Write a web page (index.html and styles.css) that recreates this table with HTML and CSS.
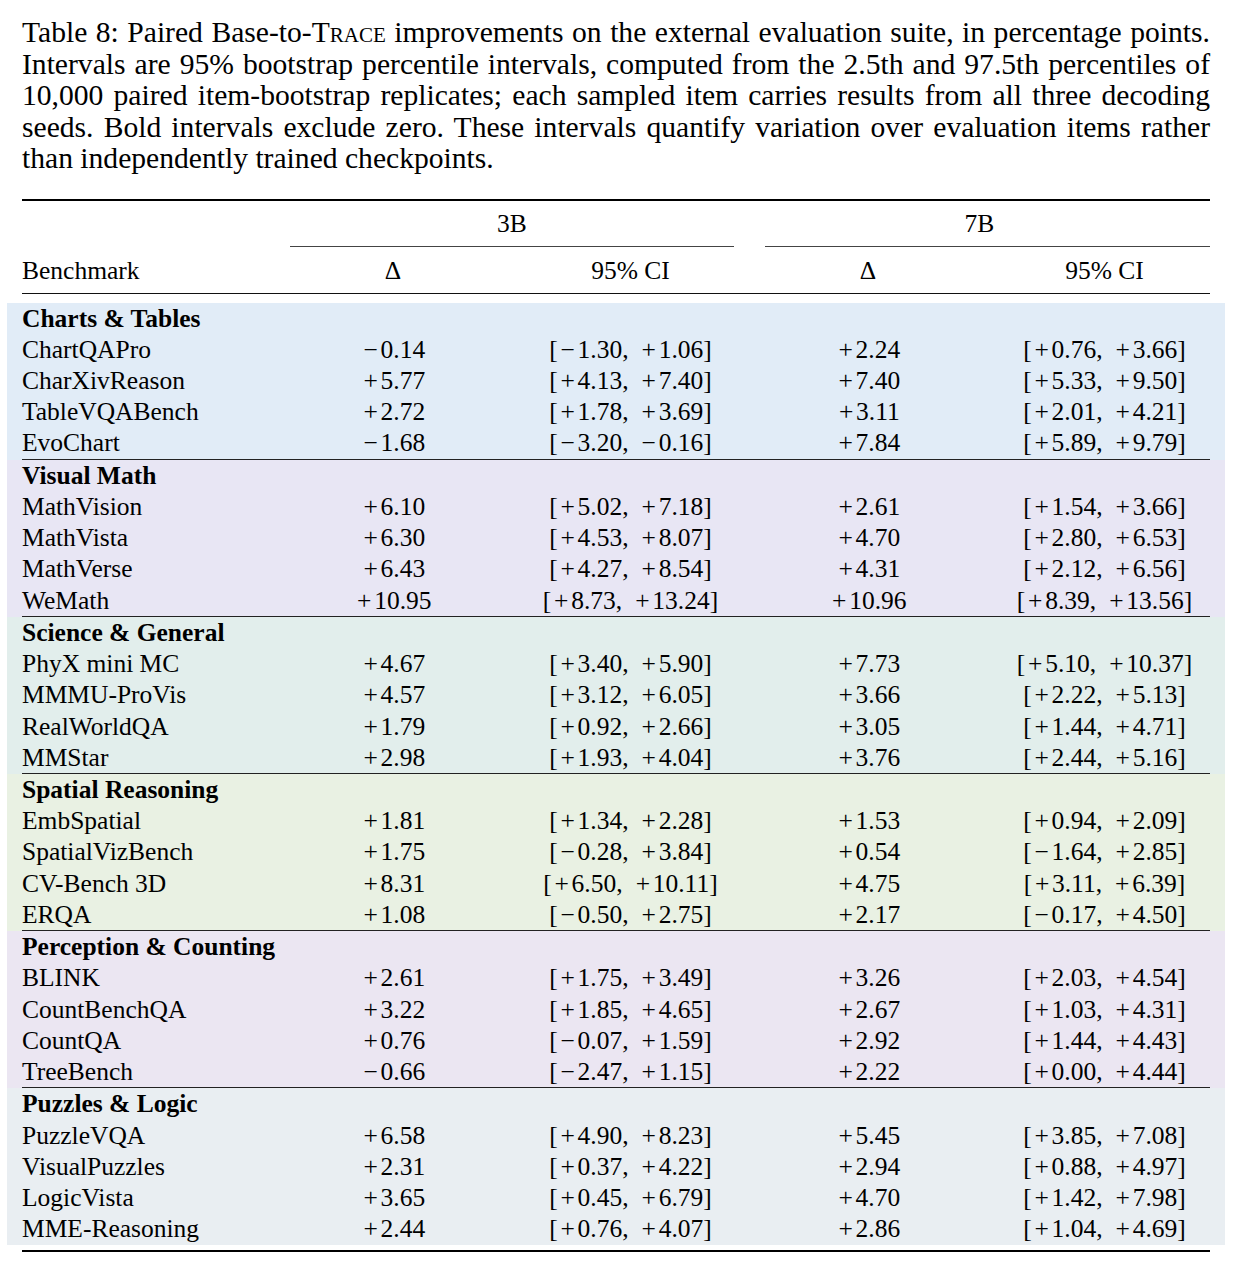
FILE: index.html
```html
<!DOCTYPE html>
<html lang="en">
<head>
<meta charset="utf-8">
<title>Table 8</title>
<link rel="stylesheet" href="styles.css">
</head>
<body>
<div class="page">
  <div class="caption">
    <span class="cl">Table 8: Paired Base-to-<span class="sc">Trace</span> improvements on the external evaluation suite, in percentage points.</span>
    <span class="cl">Intervals are 95% bootstrap percentile intervals, computed from the 2.5th and 97.5th percentiles of</span>
    <span class="cl">10,000 paired item-bootstrap replicates; each sampled item carries results from all three decoding</span>
    <span class="cl">seeds. Bold intervals exclude zero. These intervals quantify variation over evaluation items rather</span>
    <span class="cl last">than independently trained checkpoints.</span>
  </div>

  <div class="tbl">
    <div class="head">
      <div class="hrow">
        <div class="c1"></div>
        <div class="span3b">3B</div>
        <div class="span7b">7B</div>
      </div>
      <div class="row hrow2">
        <div class="c1">Benchmark</div>
        <div class="c2">Δ</div>
        <div class="c3">95% CI</div>
        <div class="c4">Δ</div>
        <div class="c5">95% CI</div>
      </div>
    </div>

    <div class="groups">
      <div class="group g1"><div class="inner sep">
        <div class="row"><div class="c1 gh">Charts &amp; Tables</div></div>
        <div class="row"><div class="c1">ChartQAPro</div><div class="c2"><i>−</i>0.14</div><div class="c3">[<i>−</i>1.30, <i>+</i>1.06]</div><div class="c4"><i>+</i>2.24</div><div class="c5">[<i>+</i>0.76, <i>+</i>3.66]</div></div>
        <div class="row"><div class="c1">CharXivReason</div><div class="c2"><i>+</i>5.77</div><div class="c3">[<i>+</i>4.13, <i>+</i>7.40]</div><div class="c4"><i>+</i>7.40</div><div class="c5">[<i>+</i>5.33, <i>+</i>9.50]</div></div>
        <div class="row"><div class="c1">TableVQABench</div><div class="c2"><i>+</i>2.72</div><div class="c3">[<i>+</i>1.78, <i>+</i>3.69]</div><div class="c4"><i>+</i>3.11</div><div class="c5">[<i>+</i>2.01, <i>+</i>4.21]</div></div>
        <div class="row"><div class="c1">EvoChart</div><div class="c2"><i>−</i>1.68</div><div class="c3">[<i>−</i>3.20, <i>−</i>0.16]</div><div class="c4"><i>+</i>7.84</div><div class="c5">[<i>+</i>5.89, <i>+</i>9.79]</div></div>
      </div></div>

      <div class="group g2"><div class="inner sep">
        <div class="row"><div class="c1 gh">Visual Math</div></div>
        <div class="row"><div class="c1">MathVision</div><div class="c2"><i>+</i>6.10</div><div class="c3">[<i>+</i>5.02, <i>+</i>7.18]</div><div class="c4"><i>+</i>2.61</div><div class="c5">[<i>+</i>1.54, <i>+</i>3.66]</div></div>
        <div class="row"><div class="c1">MathVista</div><div class="c2"><i>+</i>6.30</div><div class="c3">[<i>+</i>4.53, <i>+</i>8.07]</div><div class="c4"><i>+</i>4.70</div><div class="c5">[<i>+</i>2.80, <i>+</i>6.53]</div></div>
        <div class="row"><div class="c1">MathVerse</div><div class="c2"><i>+</i>6.43</div><div class="c3">[<i>+</i>4.27, <i>+</i>8.54]</div><div class="c4"><i>+</i>4.31</div><div class="c5">[<i>+</i>2.12, <i>+</i>6.56]</div></div>
        <div class="row"><div class="c1">WeMath</div><div class="c2"><i>+</i>10.95</div><div class="c3">[<i>+</i>8.73, <i>+</i>13.24]</div><div class="c4"><i>+</i>10.96</div><div class="c5">[<i>+</i>8.39, <i>+</i>13.56]</div></div>
      </div></div>

      <div class="group g3"><div class="inner sep">
        <div class="row"><div class="c1 gh">Science &amp; General</div></div>
        <div class="row"><div class="c1">PhyX mini MC</div><div class="c2"><i>+</i>4.67</div><div class="c3">[<i>+</i>3.40, <i>+</i>5.90]</div><div class="c4"><i>+</i>7.73</div><div class="c5">[<i>+</i>5.10, <i>+</i>10.37]</div></div>
        <div class="row"><div class="c1">MMMU-ProVis</div><div class="c2"><i>+</i>4.57</div><div class="c3">[<i>+</i>3.12, <i>+</i>6.05]</div><div class="c4"><i>+</i>3.66</div><div class="c5">[<i>+</i>2.22, <i>+</i>5.13]</div></div>
        <div class="row"><div class="c1">RealWorldQA</div><div class="c2"><i>+</i>1.79</div><div class="c3">[<i>+</i>0.92, <i>+</i>2.66]</div><div class="c4"><i>+</i>3.05</div><div class="c5">[<i>+</i>1.44, <i>+</i>4.71]</div></div>
        <div class="row"><div class="c1">MMStar</div><div class="c2"><i>+</i>2.98</div><div class="c3">[<i>+</i>1.93, <i>+</i>4.04]</div><div class="c4"><i>+</i>3.76</div><div class="c5">[<i>+</i>2.44, <i>+</i>5.16]</div></div>
      </div></div>

      <div class="group g4"><div class="inner sep">
        <div class="row"><div class="c1 gh">Spatial Reasoning</div></div>
        <div class="row"><div class="c1">EmbSpatial</div><div class="c2"><i>+</i>1.81</div><div class="c3">[<i>+</i>1.34, <i>+</i>2.28]</div><div class="c4"><i>+</i>1.53</div><div class="c5">[<i>+</i>0.94, <i>+</i>2.09]</div></div>
        <div class="row"><div class="c1">SpatialVizBench</div><div class="c2"><i>+</i>1.75</div><div class="c3">[<i>−</i>0.28, <i>+</i>3.84]</div><div class="c4"><i>+</i>0.54</div><div class="c5">[<i>−</i>1.64, <i>+</i>2.85]</div></div>
        <div class="row"><div class="c1">CV-Bench 3D</div><div class="c2"><i>+</i>8.31</div><div class="c3">[<i>+</i>6.50, <i>+</i>10.11]</div><div class="c4"><i>+</i>4.75</div><div class="c5">[<i>+</i>3.11, <i>+</i>6.39]</div></div>
        <div class="row"><div class="c1">ERQA</div><div class="c2"><i>+</i>1.08</div><div class="c3">[<i>−</i>0.50, <i>+</i>2.75]</div><div class="c4"><i>+</i>2.17</div><div class="c5">[<i>−</i>0.17, <i>+</i>4.50]</div></div>
      </div></div>

      <div class="group g5"><div class="inner sep">
        <div class="row"><div class="c1 gh">Perception &amp; Counting</div></div>
        <div class="row"><div class="c1">BLINK</div><div class="c2"><i>+</i>2.61</div><div class="c3">[<i>+</i>1.75, <i>+</i>3.49]</div><div class="c4"><i>+</i>3.26</div><div class="c5">[<i>+</i>2.03, <i>+</i>4.54]</div></div>
        <div class="row"><div class="c1">CountBenchQA</div><div class="c2"><i>+</i>3.22</div><div class="c3">[<i>+</i>1.85, <i>+</i>4.65]</div><div class="c4"><i>+</i>2.67</div><div class="c5">[<i>+</i>1.03, <i>+</i>4.31]</div></div>
        <div class="row"><div class="c1">CountQA</div><div class="c2"><i>+</i>0.76</div><div class="c3">[<i>−</i>0.07, <i>+</i>1.59]</div><div class="c4"><i>+</i>2.92</div><div class="c5">[<i>+</i>1.44, <i>+</i>4.43]</div></div>
        <div class="row"><div class="c1">TreeBench</div><div class="c2"><i>−</i>0.66</div><div class="c3">[<i>−</i>2.47, <i>+</i>1.15]</div><div class="c4"><i>+</i>2.22</div><div class="c5">[<i>+</i>0.00, <i>+</i>4.44]</div></div>
      </div></div>

      <div class="group g6"><div class="inner">
        <div class="row"><div class="c1 gh">Puzzles &amp; Logic</div></div>
        <div class="row"><div class="c1">PuzzleVQA</div><div class="c2"><i>+</i>6.58</div><div class="c3">[<i>+</i>4.90, <i>+</i>8.23]</div><div class="c4"><i>+</i>5.45</div><div class="c5">[<i>+</i>3.85, <i>+</i>7.08]</div></div>
        <div class="row"><div class="c1">VisualPuzzles</div><div class="c2"><i>+</i>2.31</div><div class="c3">[<i>+</i>0.37, <i>+</i>4.22]</div><div class="c4"><i>+</i>2.94</div><div class="c5">[<i>+</i>0.88, <i>+</i>4.97]</div></div>
        <div class="row"><div class="c1">LogicVista</div><div class="c2"><i>+</i>3.65</div><div class="c3">[<i>+</i>0.45, <i>+</i>6.79]</div><div class="c4"><i>+</i>4.70</div><div class="c5">[<i>+</i>1.42, <i>+</i>7.98]</div></div>
        <div class="row"><div class="c1">MME-Reasoning</div><div class="c2"><i>+</i>2.44</div><div class="c3">[<i>+</i>0.76, <i>+</i>4.07]</div><div class="c4"><i>+</i>2.86</div><div class="c5">[<i>+</i>1.04, <i>+</i>4.69]</div></div>
      </div></div>
    </div>
  </div>
</div>
</body>
</html>
```

FILE: styles.css
```css
html, body {
  margin: 0;
  padding: 0;
  background: #ffffff;
}

body {
  font-family: "Liberation Serif", "Times New Roman", serif;
  font-size: 25.5px;
  color: #000;
}

.page {
  width: 1235px;
  padding-top: 17px;
}

.caption {
  width: 1188px;
  margin-left: 22px;
  font-size: 29.6px;
  line-height: 31.5px;
}

.cl {
  display: block;
  text-align: justify;
  text-align-last: justify;
  white-space: nowrap;
}

.cl.last {
  text-align-last: left;
}

.sc {
  font-variant: small-caps;
}

.tbl {
  width: 1188px;
  margin-left: 22px;
  margin-top: 24px;
  border-top: 2px solid #000;
  border-bottom: 2px solid #000;
}

.head {
  border-bottom: 1px solid #111;
}

.hrow {
  display: grid;
  grid-template-columns: 268px 475px 445px;
  height: 46px;
  padding-top: 1px;
  box-sizing: border-box;
}

.span3b {
  margin-right: 31px;
  text-align: center;
  line-height: 44px;
  border-bottom: 1px solid #444;
}

.span7b {
  text-align: center;
  line-height: 44px;
  padding-right: 16px;
  border-bottom: 1px solid #444;
}

.row {
  display: grid;
  grid-template-columns: 268px 206px 269px 206px 239px;
  height: 31.24px;
  line-height: 31.24px;
  white-space: nowrap;
}

.hrow2 {
  height: 46px;
  line-height: 48px;
}

.row i {
  font-style: normal;
  margin: 0 2.7px;
}

.c1 {
  text-align: left;
}

.c2, .c3, .c4 {
  text-align: center;
}

.groups .c3, .groups .c5 {
  word-spacing: 4px;
}

.c5 {
  text-align: center;
  padding-left: 28px;
}

.gh {
  font-weight: bold;
}

.groups {
  margin-top: 9px;
  margin-bottom: 5px;
}

.group {
  margin: 0 -15px;
  padding: 0 15px;
}

.inner.sep {
  border-bottom: 1px solid #222;
}

.g1 { background: #e1ecf7; }
.g2 { background: #e8e6f4; }
.g3 { background: #e2eeec; }
.g4 { background: #e9f1e3; }
.g5 { background: #ebe6f2; }
.g6 { background: #e9eef2; }
```
